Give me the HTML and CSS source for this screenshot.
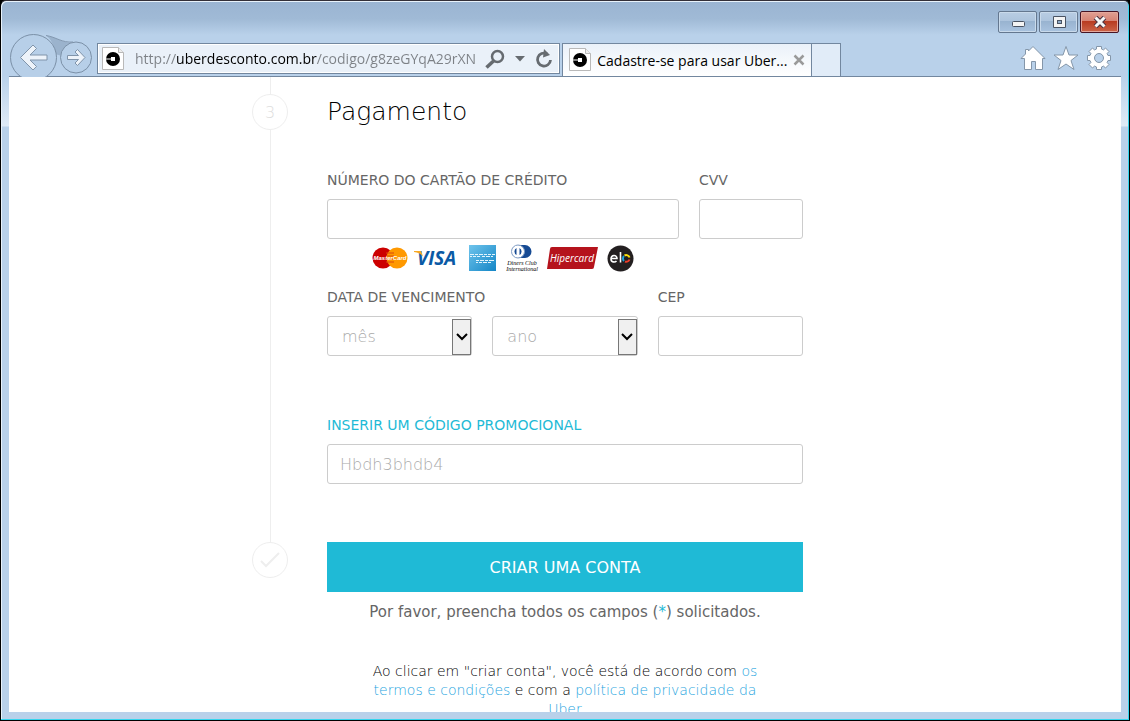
FILE: index.html
```
<!DOCTYPE html>
<html lang="pt-BR">
<head>
  <meta charset="UTF-8" />
  <meta name="viewport" content="width=device-width, initial-scale=1" />
  <title>Cadastre-se para usar Uber</title>
  <link rel="stylesheet" href="styles.css">
</head>
<body>
  <div class="window">
    <div class="titlebar">
      <button class="win-button" aria-label="Minimizar">
        <svg width="14" height="12" viewBox="0 0 14 12"><rect x="1.500" y="5.500" width="12" height="5" rx="1" fill="#f4f4f4" stroke="#4a5362"/></svg>
      </button>
      <button class="win-button" aria-label="Maximizar">
        <svg width="14" height="12" viewBox="0 0 14 12"><path d="M1.500 .5h12v11h-12z" fill="#f4f4f4" stroke="#4a5362"/><rect x="5.500" y="4.500" width="4" height="3" fill="#8fabc8" stroke="#4a5362"/></svg>
      </button>
      <button class="win-button win-close" aria-label="Fechar">
        <svg width="14" height="12" viewBox="0 0 14 12"><path d="M2.500 1.500l9 9M11.500 1.500l-9 9" stroke="#4c3340" stroke-width="5"/><path d="M2.500 1.500l9 9M11.500 1.500l-9 9" stroke="#f6f6f6" stroke-width="3"/></svg>
      </button>
    </div>

    <div class="toolbar">
      <svg class="nav-arrows" width="84" height="43" viewBox="0 0 84 43">
        <path d="M37 1.500C47 3 53 9 64 9L70 9L53 22L46 20C45 11 42 5 37 1.500z" fill="#9bb3cd"/>
        <path d="M37 1.500C47 3 53 9 64 8" fill="none" stroke="#8398b0"/>
        <circle cx="24.500" cy="23.500" r="23" fill="#b7cfe8" stroke="#7b90a7"/>
        <circle cx="67" cy="23.500" r="15.500" fill="#b7cfe8" stroke="#7b90a7"/>
        <path d="M11.500 23.500L24 11l3.500 3.500-6.500 6.500h17v5H21l6.500 6.500L24 36z" fill="#edf3fa" stroke="#8094aa"/>
        <path d="M76 23.500l-7.500-8-2.500 2.500 3.500 3.500h-11v4h11L66 29l2.500 2.500z" fill="#edf3fa" stroke="#8094aa"/>
      </svg>

      <div class="address">
        <svg class="favicon" width="23" height="24" viewBox="0 0 23 24">
          <path d="M.5.5h16l5 5v17H.5z" fill="#fff" stroke="#b9b9b9"/>
          <path d="M16.500.5v5h5" fill="#eee" stroke="#b9b9b9"/>
          <circle cx="11" cy="12" r="7" fill="#000"/>
          <path d="M3 12h7" stroke="#fff"/>
          <rect x="9" y="10" width="4" height="4" fill="#fff"/>
        </svg>
        <input class="url" type="text" aria-label="Endereço" value="http://uberdesconto.com.br/codigo/g8zeGYqA29rXN">
        <button class="icon-button" aria-label="Pesquisar">
          <svg width="20" height="20" viewBox="0 0 20 20" fill="none" stroke="#666b70"><circle cx="12.500" cy="7.500" r="5.500" stroke-width="2.500"/><path d="M8.500 12L1.500 18.500" stroke-width="3.500"/></svg>
        </button>
        <button class="icon-button" aria-label="Mostrar histórico">
          <svg width="10" height="6" viewBox="0 0 10 6"><path d="M0 0h10L5 5.500z" fill="#666b70"/></svg>
        </button>
        <button class="icon-button" aria-label="Atualizar">
          <svg width="18" height="20" viewBox="0 0 18 20"><path d="M12 4.800A6.500 6.500 0 1 0 15.500 11" fill="none" stroke="#666b70" stroke-width="2.800"/><path d="M9 0l6 6-7 2.500z" fill="#666b70"/></svg>
        </button>
      </div>

      <div class="tab">
        <svg class="favicon" width="23" height="24" viewBox="0 0 23 24">
          <path d="M.5.5h16l5 5v17H.5z" fill="#fff" stroke="#b9b9b9"/>
          <path d="M16.500.5v5h5" fill="#eee" stroke="#b9b9b9"/>
          <circle cx="11" cy="12" r="7" fill="#000"/>
          <path d="M3 12h7" stroke="#fff"/>
          <rect x="9" y="10" width="4" height="4" fill="#fff"/>
        </svg>
        <span class="tab-title">Cadastre-se para usar Uber...</span>
        <button class="icon-button" aria-label="Fechar guia">
          <svg width="12" height="12" viewBox="0 0 12 12"><path d="M1.500 1.500l9 9M10.500 1.500l-9 9" stroke="#9a9a9a" stroke-width="2.500"/></svg>
        </button>
      </div>
      <button class="new-tab" aria-label="Nova guia"></button>

      <div class="tools">
        <button class="icon-button" aria-label="Página inicial">
          <svg width="26" height="26" viewBox="0 0 26 26"><path d="M13 1.500L25 13.500H22.500V24.500H15.500V16.500H11.500V24.500H4.500V13.500H1L5.500 9V4.500H8.500V6z" fill="#fff" stroke="#8496a9"/></svg>
        </button>
        <button class="icon-button" aria-label="Favoritos">
          <svg width="26" height="26" viewBox="0 0 26 26"><path d="M13 1.500l3 8.500h9l-7 5.500 3 9-8-5.500-8 5.500 3-9L1 10h9z" fill="#fff" stroke="#8496a9"/></svg>
        </button>
        <button class="icon-button" aria-label="Ferramentas">
          <svg width="26" height="26" viewBox="0 0 26 26"><path d="M10.500 4V1.500h5V4l2 .9 2-1.900 3.500 3.500-1.900 2 .9 2h2.500v5H22l-.9 2 1.900 2-3.500 3.500-2-1.900-2 .9v2.500h-5V22l-2-.9-2 1.900L3 19.500l1.900-2-.9-2H1.500v-5H4l.9-2-1.900-2L6.500 3l2 1.900z" fill="#fff" stroke="#8496a9"/><circle cx="13" cy="13" r="4.500" fill="#b9d1ea" stroke="#8496a9"/></svg>
        </button>
      </div>
    </div>

    <main class="page">
      <form class="signup" onsubmit="return false">
        <div class="timeline">
          <span class="line line-top"></span>
          <span class="step">3</span>
          <span class="line"></span>
        </div>

        <section class="fields">
          <h1>Pagamento</h1>

          <div class="row row-card">
            <div class="field">
              <label for="card">NÚMERO DO CARTÃO DE CRÉDITO</label>
              <input id="card" type="text">
            </div>
            <div class="field">
              <label for="cvv">CVV</label>
              <input id="cvv" type="text">
            </div>
          </div>

          <div class="cards">
            <svg width="36" height="24" viewBox="0 0 36 24">
              <circle cx="11" cy="12" r="10.500" fill="#c00"/>
              <circle cx="25" cy="12" r="10.500" fill="#f90"/>
              <path d="M14 7h8M14 10h8M14 13h8M14 16h8" stroke="#d9480a"/>
              <text class="mark-master" x="18" y="14" text-anchor="middle">MasterCard</text>
            </svg>
            <svg class="visa" width="46" height="24" viewBox="0 0 46 24">
              <text class="mark-visa" x="4" y="19">VISA</text>
              <path d="M1 5h7l2 5.500C8 8 5 6.500 1 6z" fill="#f7a823"/>
            </svg>
            <svg class="amex" width="28" height="28" viewBox="0 0 28 28">
              <defs><linearGradient id="sky" x2="1" y2="1"><stop stop-color="#6fc4ec"/><stop offset="1" stop-color="#1486c6"/></linearGradient></defs>
              <rect x="1" y="1" width="27" height="26" fill="url(#sky)"/>
              <path d="M2 10.500h4m1 0h3m1 0h4m1 0h3m1 0h3m1 0h3M2 12.500h2m1 0h3m1 0h3m2 0h3m1 0h4m1 0h2M8 16.500h3m1 0h4m1 0h3m1 0h5M8 18.500h2m1 0h3m1 0h4m1 0h3" stroke="#e2f4fc"/>
            </svg>
            <svg class="diners" width="36" height="28" viewBox="0 0 36 28">
              <path d="M13 1h7a6.500 6.500 0 0 1 0 13h-7z" fill="#164a93"/>
              <circle cx="13" cy="7.500" r="6.500" fill="#fff" stroke="#7f9cc4"/>
              <path d="M11.500 4a4 4 0 0 0 0 7zM14.500 4a4 4 0 0 1 0 7z" fill="#164a93"/>
              <text class="mark-diners" x="17" y="21" text-anchor="middle">Diners Club</text>
              <text class="mark-diners" x="17" y="27" text-anchor="middle">International</text>
            </svg>
            <svg class="hiper" width="51" height="24" viewBox="0 0 51 24">
              <path d="M5 1h46l-4 20q0 2-2 2H0L3 3q0-2 2-2z" fill="#b5131c"/>
              <text class="mark-hiper" x="25" y="16" text-anchor="middle">Hipercard</text>
            </svg>
            <svg class="elo" width="27" height="27" viewBox="0 0 27 27">
              <circle cx="13.500" cy="13.500" r="13" fill="#231f20"/>
              <path d="M4 13.500h6c0-4-6-4-6 .5 0 3.500 4 3.500 5.500 2M13.500 7v10.500" fill="none" stroke="#fff" stroke-width="1.600"/>
              <path d="M17 16a3.500 3.500 0 0 1 0-5" fill="none" stroke="#1ba3dd" stroke-width="2"/>
              <path d="M17.500 10.500a3.500 3.500 0 0 1 5 2" fill="none" stroke="#fde10a" stroke-width="2"/>
              <path d="M22.500 14.500a3.500 3.500 0 0 1-4.500 2" fill="none" stroke="#ee3e2c" stroke-width="2"/>
            </svg>
          </div>

          <div class="row row-three">
            <div class="field">
              <label for="month">DATA DE VENCIMENTO</label>
              <div class="select">
                <select id="month"><option>mês</option></select>
                <span class="arrow"><svg width="12" height="8" viewBox="0 0 12 8"><path d="M1 1l5 5 5-5" fill="none" stroke="#000" stroke-width="2"/></svg></span>
              </div>
            </div>
            <div class="field">
              <div class="select">
                <select aria-label="Ano de vencimento"><option>ano</option></select>
                <span class="arrow"><svg width="12" height="8" viewBox="0 0 12 8"><path d="M1 1l5 5 5-5" fill="none" stroke="#000" stroke-width="2"/></svg></span>
              </div>
            </div>
            <div class="field">
              <label for="cep">CEP</label>
              <input id="cep" type="text">
            </div>
          </div>

          <div class="field promo">
            <label for="promo">INSERIR UM CÓDIGO PROMOCIONAL</label>
            <input id="promo" type="text" placeholder="Hbdh3bhdb4">
          </div>
        </section>

        <div class="timeline">
          <span class="step"><svg width="20" height="16" viewBox="0 0 20 16"><path d="M1 9l5 5L19 1" fill="none" stroke="#eee" stroke-width="2"/></svg></span>
        </div>

        <section class="finish">
          <button class="submit" type="submit">CRIAR UMA CONTA</button>
          <p class="required">Por favor, preencha todos os campos (<span class="star">*</span>) solicitados.</p>
          <p class="terms">Ao clicar em "criar conta", você está de acordo com <a href="#">os termos e condições</a> e com a <a href="#">política de privacidade da Uber</a></p>
        </section>
      </form>
    </main>
  </div>
</body>
</html>
```
FILE: styles.css
```
* {
  box-sizing: border-box;
}
body {
  margin: 0;
  background: #000;
  font-family: "DejaVu Sans", sans-serif;
  font-size: 14px;
  color: #000;
}
button {
  font: inherit;
  padding: 0;
  cursor: pointer;
}

/* Window frame */
.window {
  display: flex;
  flex-direction: column;
  height: 100vh;
  padding: 1px 8px 8px;
  border: 1px solid #000;
  border-top-color: #332f38;
  border-radius: 6px 6px 0 0;
  background: linear-gradient(#9ab4d2, #a0bad6 18px, #b9d1ea 34px, #b9d1ea 75px, #dfeaf6 125px, #b9d1ea 126px);
  box-shadow: inset -1px -1px #35d5ee, inset 1px 1px #e8f2fb;
}
.titlebar {
  display: flex;
  justify-content: flex-end;
  gap: 2px;
  height: 32px;
  padding: 9px 2px 0 0;
}
.win-button {
  display: flex;
  align-items: center;
  justify-content: center;
  width: 39px;
  height: 22px;
  border: 1px solid #64778f;
  border-radius: 2px;
  background: linear-gradient(#b9cde3, #adc4dd 45%, #98b3d0 46%, #a9c3df);
  box-shadow: inset 0 0 0 1px #c9daeb;
}
.win-close {
  border-color: #471525;
  background: linear-gradient(#e0a094, #d78373 45%, #b83a20 46%, #cc6549);
  box-shadow: inset 0 0 0 1px #e4a89c;
}

/* Toolbar */
.toolbar {
  display: flex;
  height: 43px;
  border-bottom: 1px solid #72879f;
  font-family: "Open Sans", sans-serif;
}
.nav-arrows {
  flex: none;
  margin-right: 4px;
}
.address {
  flex: 5 1 0;
  display: flex;
  align-items: center;
  gap: 10px;
  min-width: 0;
  height: 31px;
  margin: 9px 2px 0 0;
  padding: 0 6px 0 4px;
  border: 1px solid #72879f;
  background: #eaf1f9;
  box-shadow: inset 0 0 0 1px #fff;
}
.favicon {
  flex: none;
}
.url {
  flex: 1;
  min-width: 0;
  padding: 0;
  border: 0;
  outline: 0;
  font: inherit;
  color: transparent;
  background: linear-gradient(90deg, #7d8186 42px, #000 42px, #000 182px, #7d8186 182px);
  background-clip: text;
}
.icon-button {
  display: flex;
  flex: none;
  border: 0;
  background: none;
}
.tab {
  display: flex;
  align-items: center;
  gap: 5px;
  flex: none;
  width: 250px;
  height: 33px;
  margin-top: 9px;
  padding: 0 6px;
  border: 1px solid #72879f;
  border-bottom: 0;
  background: linear-gradient(#eaf1f9, #fff);
}
.tab-title {
  flex: 1;
  white-space: nowrap;
  overflow: hidden;
}
.new-tab {
  flex: none;
  width: 29px;
  height: 33px;
  margin-top: 9px;
  border: 1px solid #72879f;
  border-width: 1px 1px 0 0;
  background: #e1ecf8;
}
.tools {
  flex: 3 1 0;
  display: flex;
  align-items: center;
  justify-content: flex-end;
  gap: 7px;
  padding: 6px 9px 0 0;
}

/* Page */
.page {
  flex: 1;
  min-height: 0;
  overflow: hidden;
  background: #fff;
}
.signup {
  display: grid;
  grid-template-columns: 1fr minmax(0, 476px) 1fr;
}
.timeline {
  grid-column: 1;
  display: flex;
  flex-direction: column;
  align-items: center;
  justify-self: end;
  margin-right: 39px;
}
.line {
  flex: 1;
  width: 1px;
  background: #eee;
}
.line-top {
  flex: none;
  height: 17px;
}
.step {
  display: flex;
  align-items: center;
  justify-content: center;
  width: 36px;
  height: 36px;
  border: 1px solid #eee;
  border-radius: 50%;
  font-size: 16px;
  font-weight: 200;
  color: #ddd;
}
.fields,
.finish {
  grid-column: 2;
}
.fields {
  padding: 16px 0 58px;
}
h1 {
  margin: 0 0 39px;
  font-size: 25px;
  font-weight: 200;
  line-height: 38px;
}
.row {
  display: grid;
  gap: 20px;
  align-items: end;
}
.row-card {
  grid-template-columns: 1fr 104px;
}
.row-three {
  grid-template-columns: repeat(3, minmax(0, 1fr));
}
label {
  display: block;
  margin-bottom: 9px;
  line-height: 20px;
  color: #666;
  white-space: nowrap;
}
.field input,
.select select {
  display: block;
  width: 100%;
  height: 40px;
  padding: 0 12px;
  border: 1px solid #ccc;
  border-radius: 3px;
  background: #fff;
  font-family: inherit;
  font-size: 16px;
  font-weight: 200;
  color: #aaa;
}
.field input::placeholder {
  color: #aaa;
}
.select {
  position: relative;
}
.select select {
  appearance: none;
  padding: 0 14px;
}
.arrow {
  position: absolute;
  top: 3px;
  right: 1px;
  display: flex;
  align-items: center;
  justify-content: center;
  width: 19px;
  height: 36px;
  border: 1px solid #777;
  background: #f0f0f0;
  pointer-events: none;
}
.promo {
  margin-top: 59px;
}
.promo label {
  color: #1fbad6;
}

/* Card brands */
.cards {
  display: flex;
  align-items: center;
  gap: 9px;
  height: 38px;
  margin-bottom: 10px;
  padding-left: 45px;
}
.cards svg {
  flex: none;
}
.visa {
  margin-left: -4px;
}
.hiper {
  margin-left: -3px;
}
.mark-master {
  font: italic bold 6px "Liberation Sans", sans-serif;
  fill: #fff;
}
.mark-visa {
  font: italic bold 19px "Open Sans", sans-serif;
  fill: #0b5aa5;
}
.mark-diners {
  font: italic 6px "Liberation Serif", serif;
  fill: #000;
}
.mark-hiper {
  font: italic 10px "Open Sans", sans-serif;
  fill: #fff;
}

/* Submit and terms */
.submit {
  display: block;
  width: 100%;
  height: 50px;
  border: 0;
  background: #1fbad6;
  color: #fff;
  font-size: 16px;
}
.required {
  margin: 10px 0 40px;
  font-size: 15px;
  line-height: 20px;
  color: #666;
  text-align: center;
}
.star {
  color: #1fbad6;
}
.terms {
  margin: 0 auto;
  max-width: 400px;
  line-height: 19px;
  text-align: center;
  font-weight: 200;
}
.terms a {
  color: #1fa5e0;
  text-decoration: none;
}
```
